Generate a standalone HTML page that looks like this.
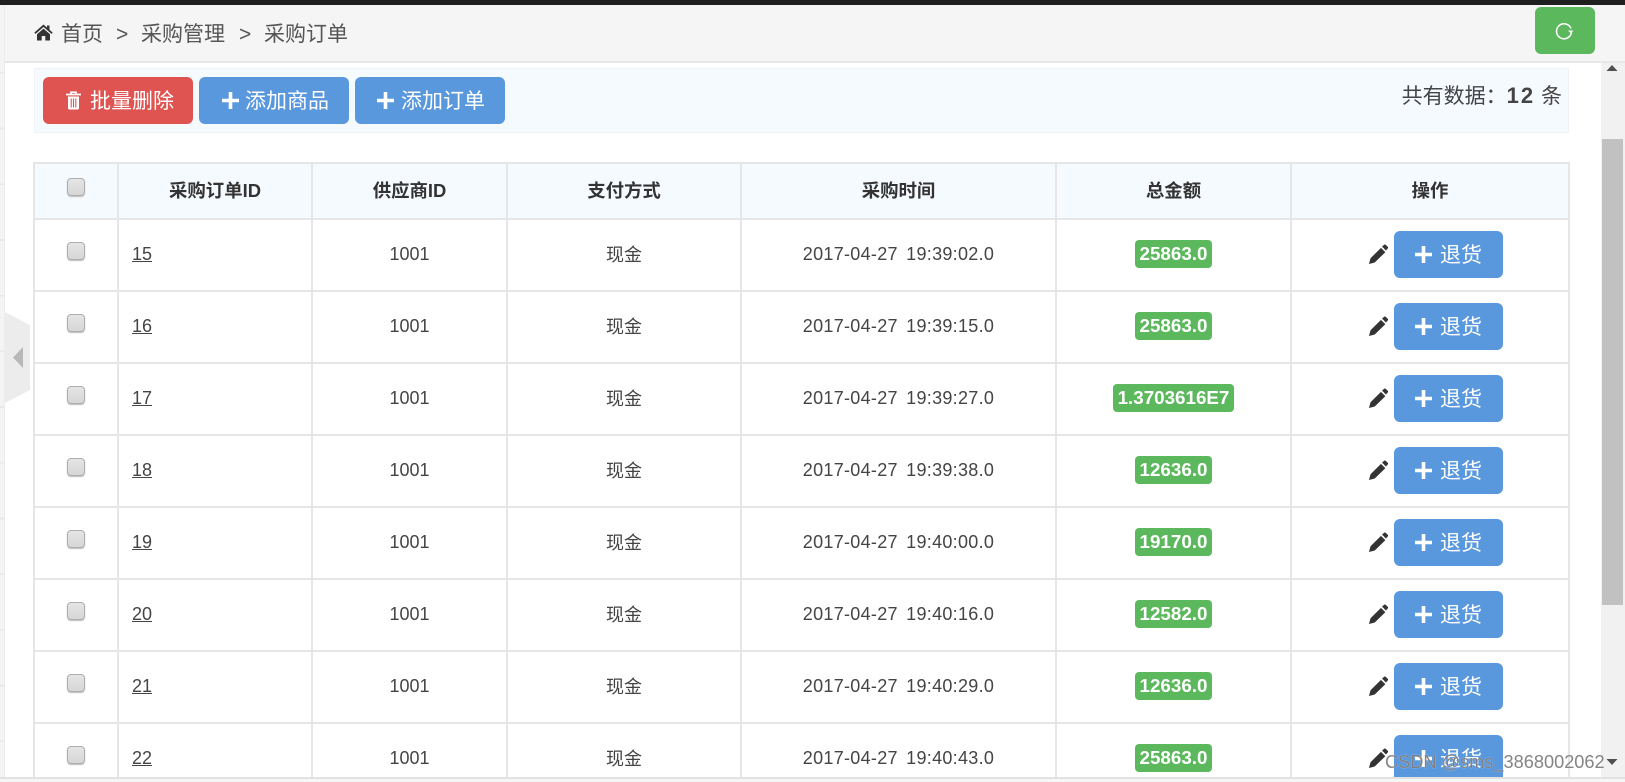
<!DOCTYPE html>
<html lang="zh-CN"><head><meta charset="utf-8"><title>采购订单</title>
<style>
*{box-sizing:border-box}
html,body{margin:0;padding:0;width:1625px;height:782px;overflow:hidden;background:#fff;font-family:"Liberation Sans","Noto Sans CJK SC",sans-serif;color:#333}
.a{position:absolute}
#top{left:0;top:0;width:1625px;height:5px;background:#1f1f1f}
#strip{left:0;top:5px;width:5px;height:777px;background:repeating-linear-gradient(#f4f4f4 0,#f4f4f4 54px,#e9e9e9 54px,#e9e9e9 55.7px);background-position:0 13px;border-right:1px solid #ececec}
#head{left:5px;top:5px;width:1620px;height:58px;background:#f5f5f5;border-bottom:2px solid #e8e8e8}
.crumb{top:15px;font-size:21px;line-height:40px;color:#555;white-space:nowrap}
#tool{left:34px;top:68px;width:1535px;height:65px;background:#f5faff;border:1px solid #eef1f5}
.btn{display:block;color:#fff;border-radius:6px;font-size:21px;line-height:50px;height:47px;background:#5a98de;white-space:nowrap}
#tbl{position:absolute;left:33px;top:162px;width:1535px;table-layout:fixed;border-collapse:collapse;background:#fff}
#tbl th,#tbl td{border:2px solid #e6e6e6;padding:0;text-align:center;vertical-align:middle;position:relative}
#tbl th{height:56px;background:#f5faff;font-size:18.4px;font-weight:700;color:#333;padding-bottom:2px}
#tbl td{height:72px;font-size:18px;color:#444;padding-bottom:2px}
.cb{position:absolute;left:32px;width:18px;height:18px;top:22px;border:1px solid #adadad;border-radius:4px;background:linear-gradient(#e6e6e6,#d6d6d6);box-shadow:0 1px 1px #bbb}
th .cb{top:14px}
td.l{text-align:left!important;padding-left:13px!important}
td.l u{color:#444}
td.t{letter-spacing:.3px;word-spacing:3px}
.b{display:inline-block;height:28px;line-height:28px;padding:0 5px;background:#5cb85c;color:#fff;font-weight:700;font-size:18.8px;border-radius:4px;position:relative;top:0}
.p{position:absolute;left:77px;top:24px;width:19px;height:20px}
.r{position:absolute;left:102px;top:11px;width:109px;height:47px;background:#5a98de;border-radius:6px;color:#fff;font-size:21px;line-height:49px;text-align:left;padding-left:46px}
.r svg{position:absolute;left:21px;top:15px}
#clip{left:0;top:0;width:1601px;height:777px;overflow:hidden}
#foot{left:0;top:777px;width:1625px;height:5px;background:#f6f6f6;border-top:2px solid #e2e2e2}
#sb{left:1601px;top:63px;width:24px;height:719px;background:#f1f1f1}
#thumb{left:1602px;top:139px;width:21px;height:466px;background:#c1c1c1}
#mark{left:1385px;top:749px;font-size:18.2px;line-height:26px;color:rgba(110,110,110,.85);white-space:nowrap;text-shadow:0 0 1px rgba(255,255,255,.8)}
</style></head><body>
<div id="clip" class="a">
<div id="tool" class="a">
<div class="a" style="right:6px;top:11px;font-size:21px;line-height:30px;color:#444;white-space:nowrap">共有数据<span style="font-family:'Noto Sans CJK TC',sans-serif">：</span><b style="font-size:22px;letter-spacing:2px">12</b> 条</div>
</div>
<a class="btn a" style="left:43px;top:77px;width:150px;background:#df5350;padding-left:47px">批量删除
<svg class="a" style="left:22px;top:14px" width="17" height="19" viewBox="0 0 17 19"><path d="M1 3.500h15M6 3V1.200h5V3" fill="none" stroke="#fff" stroke-width="1.700"/><path d="M3 5.500h11V17a1.500 1.500 0 0 1-1.500 1.500h-8A1.500 1.500 0 0 1 3 17z" fill="#fff"/><path d="M6.200 7.500v9M8.500 7.500v9M10.800 7.500v9" stroke="#df5350" stroke-width="1.100"/></svg></a>
<a class="btn a" style="left:199px;top:77px;width:150px;padding-left:46px">添加商品
<svg class="a" style="left:23px;top:15px" width="17" height="17" viewBox="0 0 17 17"><path d="M8.500 0v17M0 8.500h17" stroke="#fff" stroke-width="3.600"/></svg></a>
<a class="btn a" style="left:355px;top:77px;width:150px;padding-left:46px">添加订单
<svg class="a" style="left:22px;top:15px" width="17" height="17" viewBox="0 0 17 17"><path d="M8.500 0v17M0 8.500h17" stroke="#fff" stroke-width="3.600"/></svg></a>
<table id="tbl">
<colgroup><col style="width:84px"><col style="width:194px"><col style="width:195px"><col style="width:234px"><col style="width:315px"><col style="width:235px"><col style="width:278px"></colgroup>
<tr><th><div class="cb"></div></th><th>采购订单ID</th><th>供应商ID</th><th>支付方式</th><th>采购时间</th><th>总金额</th><th>操作</th></tr>
<tr><td><div class="cb"></div></td><td class="l"><u>15</u></td><td>1001</td><td>现金</td><td class="t">2017-04-27 19:39:02.0</td><td><span class="b">25863.0</span></td><td><svg class="p" viewBox="0 0 20 21"><path d="M0 21l1.600-6L12.600 4l4.600 4.600L6 19.400zM13.800 2.800L15.600 1c.7-.7 1.600-.7 2.200 0l1.700 1.700c.7.7.7 1.600 0 2.300l-1.700 1.800z" fill="#333"/></svg><div class="r"><svg width="17" height="17" viewBox="0 0 17 17"><path d="M8.500 0v17M0 8.500h17" stroke="#fff" stroke-width="3.600"/></svg>退货</div></td></tr>
<tr><td><div class="cb"></div></td><td class="l"><u>16</u></td><td>1001</td><td>现金</td><td class="t">2017-04-27 19:39:15.0</td><td><span class="b">25863.0</span></td><td><svg class="p" viewBox="0 0 20 21"><path d="M0 21l1.600-6L12.600 4l4.600 4.600L6 19.400zM13.800 2.800L15.600 1c.7-.7 1.600-.7 2.200 0l1.700 1.700c.7.7.7 1.600 0 2.300l-1.700 1.800z" fill="#333"/></svg><div class="r"><svg width="17" height="17" viewBox="0 0 17 17"><path d="M8.500 0v17M0 8.500h17" stroke="#fff" stroke-width="3.600"/></svg>退货</div></td></tr>
<tr><td><div class="cb"></div></td><td class="l"><u>17</u></td><td>1001</td><td>现金</td><td class="t">2017-04-27 19:39:27.0</td><td><span class="b">1.3703616E7</span></td><td><svg class="p" viewBox="0 0 20 21"><path d="M0 21l1.600-6L12.600 4l4.600 4.600L6 19.400zM13.800 2.800L15.600 1c.7-.7 1.600-.7 2.200 0l1.700 1.700c.7.7.7 1.600 0 2.300l-1.700 1.800z" fill="#333"/></svg><div class="r"><svg width="17" height="17" viewBox="0 0 17 17"><path d="M8.500 0v17M0 8.500h17" stroke="#fff" stroke-width="3.600"/></svg>退货</div></td></tr>
<tr><td><div class="cb"></div></td><td class="l"><u>18</u></td><td>1001</td><td>现金</td><td class="t">2017-04-27 19:39:38.0</td><td><span class="b">12636.0</span></td><td><svg class="p" viewBox="0 0 20 21"><path d="M0 21l1.600-6L12.600 4l4.600 4.600L6 19.400zM13.800 2.800L15.600 1c.7-.7 1.600-.7 2.200 0l1.700 1.700c.7.7.7 1.600 0 2.300l-1.700 1.800z" fill="#333"/></svg><div class="r"><svg width="17" height="17" viewBox="0 0 17 17"><path d="M8.500 0v17M0 8.500h17" stroke="#fff" stroke-width="3.600"/></svg>退货</div></td></tr>
<tr><td><div class="cb"></div></td><td class="l"><u>19</u></td><td>1001</td><td>现金</td><td class="t">2017-04-27 19:40:00.0</td><td><span class="b">19170.0</span></td><td><svg class="p" viewBox="0 0 20 21"><path d="M0 21l1.600-6L12.600 4l4.600 4.600L6 19.400zM13.800 2.800L15.600 1c.7-.7 1.600-.7 2.200 0l1.700 1.700c.7.7.7 1.600 0 2.300l-1.700 1.800z" fill="#333"/></svg><div class="r"><svg width="17" height="17" viewBox="0 0 17 17"><path d="M8.500 0v17M0 8.500h17" stroke="#fff" stroke-width="3.600"/></svg>退货</div></td></tr>
<tr><td><div class="cb"></div></td><td class="l"><u>20</u></td><td>1001</td><td>现金</td><td class="t">2017-04-27 19:40:16.0</td><td><span class="b">12582.0</span></td><td><svg class="p" viewBox="0 0 20 21"><path d="M0 21l1.600-6L12.600 4l4.600 4.600L6 19.400zM13.800 2.800L15.600 1c.7-.7 1.600-.7 2.200 0l1.700 1.700c.7.7.7 1.600 0 2.300l-1.700 1.800z" fill="#333"/></svg><div class="r"><svg width="17" height="17" viewBox="0 0 17 17"><path d="M8.500 0v17M0 8.500h17" stroke="#fff" stroke-width="3.600"/></svg>退货</div></td></tr>
<tr><td><div class="cb"></div></td><td class="l"><u>21</u></td><td>1001</td><td>现金</td><td class="t">2017-04-27 19:40:29.0</td><td><span class="b">12636.0</span></td><td><svg class="p" viewBox="0 0 20 21"><path d="M0 21l1.600-6L12.600 4l4.600 4.600L6 19.400zM13.800 2.800L15.600 1c.7-.7 1.600-.7 2.200 0l1.700 1.700c.7.7.7 1.600 0 2.300l-1.700 1.800z" fill="#333"/></svg><div class="r"><svg width="17" height="17" viewBox="0 0 17 17"><path d="M8.500 0v17M0 8.500h17" stroke="#fff" stroke-width="3.600"/></svg>退货</div></td></tr>
<tr><td><div class="cb"></div></td><td class="l"><u>22</u></td><td>1001</td><td>现金</td><td class="t">2017-04-27 19:40:43.0</td><td><span class="b">25863.0</span></td><td><svg class="p" viewBox="0 0 20 21"><path d="M0 21l1.600-6L12.600 4l4.600 4.600L6 19.400zM13.800 2.800L15.600 1c.7-.7 1.600-.7 2.200 0l1.700 1.700c.7.7.7 1.600 0 2.300l-1.700 1.800z" fill="#333"/></svg><div class="r"><svg width="17" height="17" viewBox="0 0 17 17"><path d="M8.500 0v17M0 8.500h17" stroke="#fff" stroke-width="3.600"/></svg>退货</div></td></tr>
</table>
</div>
<div id="top" class="a"></div>
<div id="strip" class="a"></div>
<div id="head" class="a"></div>
<svg class="a" style="left:34px;top:24px" width="19" height="17" viewBox="0 0 19 17"><path d="M9.500 0.500L0.300 8.600l1.200 1.300L9.500 3l8 6.900 1.200-1.300L15.500 5.800V1.500h-2.500v2.100z" fill="#333"/><path d="M3 10.300L9.500 4.600 16 10.300V16.500h-4.700v-4.500H7.700v4.500H3z" fill="#333"/></svg>
<div class="a crumb" style="left:61px">首页</div>
<div class="a crumb" style="left:116px">&gt;</div>
<div class="a crumb" style="left:141px">采购管理</div>
<div class="a crumb" style="left:239px">&gt;</div>
<div class="a crumb" style="left:264px">采购订单</div>
<div class="a" style="left:1535px;top:7px;width:60px;height:47px;background:#5cb85c;border-radius:6px"></div>
<svg class="a" style="left:1554px;top:21px" width="20" height="20" viewBox="0 0 20 20"><path d="M17 7.500A7.500 7.500 0 1 0 17.500 11" fill="none" stroke="#fff" stroke-width="1.500"/><path d="M14 9.500h5.500l-2.700 2.800z" fill="#fff"/></svg>
<svg class="a" style="left:5px;top:312px" width="26" height="92" viewBox="0 0 26 92"><path d="M0 0L25 13V78L0 91z" fill="#ececec"/><path d="M8 45.500L18 35V56z" fill="#b8b8b8"/></svg>
<div id="sb" class="a"></div>
<div id="thumb" class="a"></div>
<svg class="a" style="left:1606px;top:64px" width="12" height="8"><path d="M6 1L11.500 7H.5z" fill="#505050"/></svg>
<svg class="a" style="left:1606px;top:758px" width="12" height="8"><path d="M6 7L11.500 1H.5z" fill="#505050"/></svg>
<div id="foot" class="a"></div>
<div id="mark" class="a">CSDN @sms_3868002062</div>
</body></html>
